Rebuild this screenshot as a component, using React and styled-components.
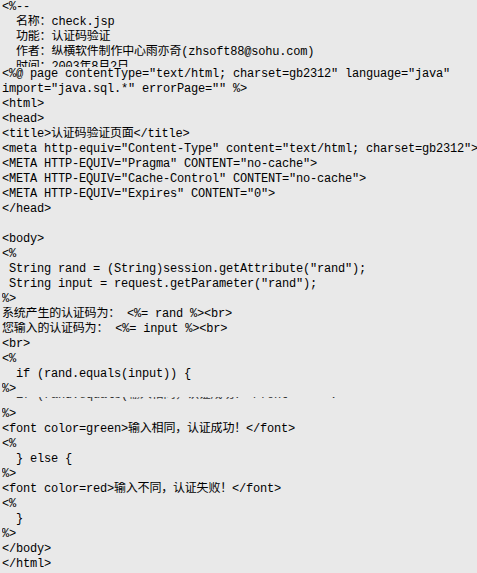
import React from "react"
import styled, { createGlobalStyle } from "styled-components"

const GlobalStyle = createGlobalStyle`
  html, body {
    margin: 0;
    padding: 0;
    overflow: hidden;
    background: #e9e9e9;
  }
`

const Listing = styled.div`
  width: 477px;
  height: 573px;
  overflow: hidden;
  padding-left: 2px;
  box-sizing: border-box;
  background: #e9e9e9;
  color: #000;
  font-family: "Liberation Mono", "Noto Sans CJK SC", monospace;
  font-size: 12px;
  letter-spacing: -0.2px;
`

const Block = styled.div`
  display: flex;
  flex-direction: column;
`

const Line = styled.div`
  height: ${p => p.$clip || 15}px;
  line-height: 15px;
  white-space: pre;
  overflow: hidden;
`

// thin slice of a half-repainted row, only its middle shows
const Strip = styled.div`
  height: 10px;
  overflow: hidden;
  white-space: pre;
  line-height: 15px;
  color: #333;
  span {
    display: block;
    margin-top: -9px;
  }
`

const header = [
  "<%--",
  "  名称：check.jsp",
  "  功能：认证码验证",
  "  作者：纵横软件制作中心雨亦奇(zhsoft88@sohu.com)",
]

const top = [
  '<%@ page contentType="text/html; charset=gb2312" language="java"',
  'import="java.sql.*" errorPage="" %>',
  "<html>",
  "<head>",
  "<title>认证码验证页面</title>",
  '<meta http-equiv="Content-Type" content="text/html; charset=gb2312">',
  '<META HTTP-EQUIV="Pragma" CONTENT="no-cache">',
  '<META HTTP-EQUIV="Cache-Control" CONTENT="no-cache">',
  '<META HTTP-EQUIV="Expires" CONTENT="0">',
  "</head>",
  "",
  "<body>",
  "<%",
  ' String rand = (String)session.getAttribute("rand");',
  ' String input = request.getParameter("rand");',
  "%>",
  "系统产生的认证码为： <%= rand %><br>",
  "您输入的认证码为： <%= input %><br>",
  "<br>",
  "<%",
  "  if (rand.equals(input)) {",
  "%>",
]

const bottom = [
  "%>",
  "<font color=green>输入相同，认证成功！</font>",
  "<%",
  "  } else {",
  "%>",
  "<font color=red>输入不同，认证失败！</font>",
  "<%",
  "  }",
  "%>",
  "</body>",
  "</html>",
]

const Lines = ({ items }) =>
  <Block>
    {items.map((text, i) => <Line key={i}>{text}</Line>)}
  </Block>

export default function App() {
  return (
    <>
      <GlobalStyle />
      <Listing>
        <Block>
          {header.map((text, i) => <Line key={i}>{text}</Line>)}
          <Line $clip={7}>{"  时间：2003年8月2日"}</Line>
        </Block>
        <Lines items={top} />
        <Strip>
          <span>{"  if (rand.equals(输入相同，认证成功！</font>     ."}</span>
        </Strip>
        <Lines items={bottom} />
      </Listing>
    </>
  )
}
